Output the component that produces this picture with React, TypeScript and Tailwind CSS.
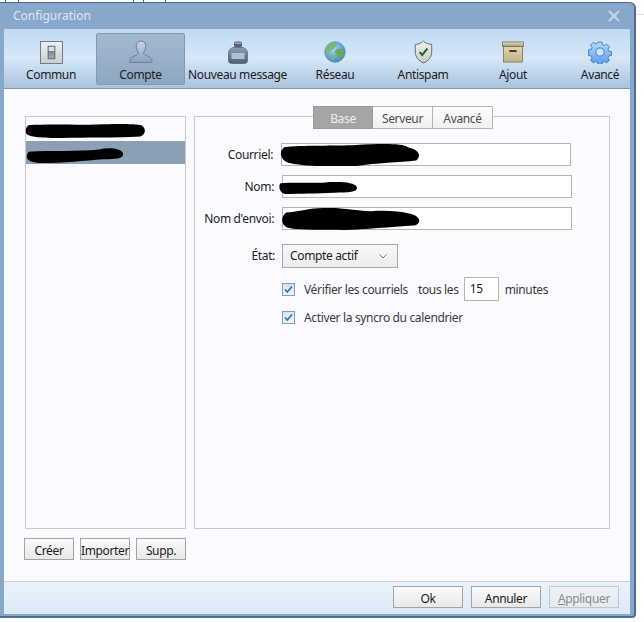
import React from "react";

const font = { fontFamily: '"Noto Sans", "Open Sans", sans-serif' };

function Scribble({ d, className }: { d: string; className: string }) {
  return (
    <svg className={`absolute pointer-events-none ${className}`} viewBox="0 0 100 20" preserveAspectRatio="none" aria-hidden="true">
      <path d={d} fill="#000" />
    </svg>
  );
}

const CommunIcon = () => (
  <svg width="23" height="23" viewBox="0 0 24 24">
    <defs>
      <linearGradient id="c1" x1="0" y1="0" x2="0" y2="1">
        <stop offset="0" stopColor="#eef1ee" />
        <stop offset="1" stopColor="#c9d0cb" />
      </linearGradient>
      <linearGradient id="c2" x1="0" y1="0" x2="0" y2="1">
        <stop offset="0" stopColor="#dde0de" />
        <stop offset="0.35" stopColor="#dde0de" />
        <stop offset="0.36" stopColor="#76838e" />
        <stop offset="1" stopColor="#a6b0b6" />
      </linearGradient>
    </defs>
    <rect x="0.5" y="0.5" width="23" height="23" fill="url(#c1)" stroke="#66798c" />
    <rect x="8.5" y="5.5" width="7" height="13" fill="url(#c2)" stroke="#5a6672" />
  </svg>
);

const CompteIcon = () => (
  <svg width="24" height="24" viewBox="0 0 24 24">
    <defs>
      <linearGradient id="u1" x1="0" y1="0" x2="0" y2="1">
        <stop offset="0" stopColor="#c9d5e4" />
        <stop offset="1" stopColor="#8c9fc0" />
      </linearGradient>
    </defs>
    <path
      d="M12 1c3.200 0 4.800 2.400 4.800 5.200 0 2.600-1 4.400-2 5.800-.6.900-.3 2 .8 2.600l5 2.500c1.400.7 2.400 2.200 2.400 3.900v1.500H1v-1.500c0-1.700 1-3.200 2.400-3.900l5-2.500c1.100-.6 1.400-1.700.8-2.600-1-1.400-2-3.200-2-5.800C7.200 3.400 8.800 1 12 1z"
      fill="url(#u1)"
      stroke="#6a7f9f"
    />
  </svg>
);

const InkIcon = () => (
  <svg width="20" height="23" viewBox="0 0 20 23">
    <defs>
      <linearGradient id="i1" x1="0" y1="0" x2="0" y2="1">
        <stop offset="0" stopColor="#8aa0b6" />
        <stop offset="1" stopColor="#4a5e76" />
      </linearGradient>
    </defs>
    <rect x="6" y="0.500" width="8" height="6" rx="2" fill="#56626f" />
    <rect x="7" y="1.500" width="6" height="1.500" fill="#99a4af" />
    <path d="M5 6.500h10c3 1 4.500 3 4.500 5.500v7.500c0 1.700-1.200 3-3 3h-13c-1.800 0-3-1.300-3-3V12c0-2.500 1.500-4.500 4.500-5.500z" fill="url(#i1)" stroke="#42536a" strokeWidth="0.6" />
    <rect x="3.500" y="12" width="13" height="6" fill="#aec0d1" />
  </svg>
);

const GlobeIcon = () => (
  <svg width="22" height="22" viewBox="0 0 24 24">
    <defs>
      <radialGradient id="g1" cx="0.4" cy="0.35" r="0.75">
        <stop offset="0" stopColor="#a9d9f1" />
        <stop offset="1" stopColor="#3180bf" />
      </radialGradient>
    </defs>
    <circle cx="12" cy="12" r="11.200" fill="url(#g1)" stroke="#5b8cab" strokeWidth="0.8" />
    <path d="M4 5c3-3 8-4 10-2 1 2-2 3-3 5s-3 1-4 3-1 4-3 2-2-6 0-8z" fill="#79ba66" />
    <path d="M14 9c2-1 6-1 8 2 0 3-1 6-4 9-2 0-3-2-3-4s-3-2-3-4 1-2 2-3z" fill="#67ab59" />
    <path d="M8 15c2 0 3 2 3 4s-1 3-2 2-2-5-1-6z" fill="#79ba66" />
  </svg>
);

const ShieldIcon = () => (
  <svg width="19" height="24" viewBox="0 0 22 24" preserveAspectRatio="none">
    <defs>
      <linearGradient id="s1" x1="0" y1="0" x2="0" y2="1">
        <stop offset="0" stopColor="#f1f3ef" />
        <stop offset="1" stopColor="#c3c9c3" />
      </linearGradient>
    </defs>
    <path d="M11 1c2 2 5 3 9.500 3.500V12c0 5-4 9-9.500 11C5.500 21 1.500 17 1.500 12V4.500C6 4 9 3 11 1z" fill="url(#s1)" stroke="#5c6a70" />
    <path d="M6.500 12l3 3 6-6.500" fill="none" stroke="#1f5a2a" strokeWidth="2" />
  </svg>
);

const BoxIcon = () => (
  <svg width="22" height="22" viewBox="0 0 24 24">
    <defs>
      <linearGradient id="b1" x1="0" y1="0" x2="0" y2="1">
        <stop offset="0" stopColor="#dfd7af" />
        <stop offset="1" stopColor="#bfb387" />
      </linearGradient>
      <linearGradient id="b2" x1="0" y1="0" x2="0" y2="1">
        <stop offset="0" stopColor="#e8dfbc" />
        <stop offset="1" stopColor="#a89c72" />
      </linearGradient>
    </defs>
    <rect x="1.500" y="6" width="21" height="17" fill="url(#b1)" stroke="#6d6a55" strokeWidth="0.8" />
    <rect x="0.500" y="1" width="23" height="5" fill="url(#b2)" stroke="#6d6a55" strokeWidth="0.8" />
    <rect x="8" y="10" width="8" height="2" fill="#36342a" />
  </svg>
);

const GearIcon = () => (
  <svg width="24" height="24" viewBox="0 0 24 24">
    <defs>
      <linearGradient id="ge" x1="0" y1="0" x2="0" y2="1">
        <stop offset="0" stopColor="#b3d8f8" />
        <stop offset="1" stopColor="#5a9ee8" />
      </linearGradient>
    </defs>
    <path
      fillRule="evenodd"
      d="M9.800 1h4.400l.6 3 2 .9 2.600-1.700 3.100 3.100-1.700 2.600.9 2 3 .6v4.400l-3 .6-.9 2 1.700 2.600-3.100 3.100-2.600-1.700-2 .9-.6 3H9.800l-.6-3-2-.9-2.600 1.700-3.100-3.100 1.700-2.600-.9-2-3-.6V9.600l3-.6.9-2-1.700-2.600 3.100-3.100 2.600 1.700 2-.9zM12 7.500a4.500 4.500 0 1 0 0 9 4.500 4.500 0 0 0 0-9z"
      transform="translate(1.200 1.200) scale(0.9)"
      fill="url(#ge)"
      stroke="#2d6fbd"
      strokeWidth="0.9"
    />
  </svg>
);

const items = [
  { label: "Commun", w: "w-[90px]", icon: <CommunIcon /> },
  { label: "Compte", w: "w-[89px]", icon: <CompteIcon />, active: true },
  { label: "Nouveau message", w: "w-[105px]", icon: <InkIcon /> },
  { label: "Réseau", w: "w-[90px]", icon: <GlobeIcon /> },
  { label: "Antispam", w: "w-[86px]", icon: <ShieldIcon /> },
  { label: "Ajout", w: "w-[94px]", icon: <BoxIcon /> },
  { label: "Avancé", w: "w-[70px] ml-[5px]", icon: <GearIcon /> },
];

function ToolItem({ label, w, icon, active }: { label: string; w: string; icon: React.ReactNode; active?: boolean }) {
  return (
    <div
      className={`${w} shrink-0 h-[52px] flex flex-col items-center rounded-[2px] border pt-[6px] ${
        active ? "border-[#8299b1] bg-gradient-to-b from-[#a3b9d0] to-[#8ea6bf]" : "border-transparent"
      }`}
    >
      <div className="h-[24px] flex items-center justify-center">{icon}</div>
      <div className="mt-[3px] text-[12px] leading-[16px] whitespace-nowrap text-[#1b1b1b]">{label}</div>
    </div>
  );
}

function Btn({ children, className = "" }: { children: React.ReactNode; className?: string }) {
  return (
    <div
      className={`h-[22px] pt-[3px] flex items-center justify-center border border-[#a3a3a3] bg-gradient-to-b from-[#fbfbfb] to-[#e8e8e8] text-[12px] leading-none text-[#1b1b1b] whitespace-nowrap ${className}`}
    >
      {children}
    </div>
  );
}

function Check() {
  return (
    <div className="w-[13px] h-[13px] shrink-0 border border-[#8a9bb0] bg-gradient-to-b from-[#d6e3f3] to-[#eef4fa] flex items-center justify-center">
      <svg width="9" height="9" viewBox="0 0 9 9">
        <path d="M1 4.500l2.300 2.500L8 1.500" fill="none" stroke="#3473b3" strokeWidth="1.700" />
      </svg>
    </div>
  );
}

function Field({ label, scribble, className = "" }: { label: string; scribble: React.ReactNode; className?: string }) {
  return (
    <div className={`flex items-center h-[23px] ${className}`}>
      <div className="w-[79px] text-right text-[12px] text-[#1b1b1b] whitespace-nowrap">{label}</div>
      <div className="ml-[8px] w-[290px] h-[23px] border border-[#b4b4b4] bg-white relative">{scribble}</div>
    </div>
  );
}

export default function App() {
  return (
    <div className="w-[644px] h-[622px] bg-white relative overflow-hidden pt-[2px] tracking-[-0.35px]" style={font}>
      <div className="absolute left-[5px] top-0 w-px h-[2px] bg-[#5a6a7a]" />
      <div className="absolute left-[18px] top-0 w-px h-[2px] bg-[#5a6a7a]" />
      <div className="absolute left-[133px] top-0 w-px h-[2px] bg-[#5a6a7a]" />
      <div className="absolute left-[143px] top-0 w-px h-[2px] bg-[#5a6a7a]" />
      <div className="absolute left-[165px] top-0 w-px h-[2px] bg-[#5a6a7a]" />
      <div className="absolute left-[636px] top-[14px] w-[8px] h-px bg-[#e2e2e2]" />

      <div className="w-[636px] h-[616px] rounded-tr-[6px] rounded-br-[4px] border-t border-r-2 border-b-2 border-[#4f6d8f] bg-[#87a7cb] flex flex-col pl-[4px] pr-[4px] pb-[2px]">
        <div className="h-[26px] shrink-0 flex items-center justify-between pl-[9px] pr-[10px]">
          <span className="text-[12px] tracking-normal text-[#dce7f3]">Configuration</span>
          <svg width="12" height="12" viewBox="0 0 12 12">
            <path d="M1 1l10 10M11 1L1 11" stroke="#c3d5e8" strokeWidth="2.200" />
          </svg>
        </div>

        <div className="h-[60px] shrink-0 flex items-start pt-[4px] pl-[2px] bg-gradient-to-b from-[#c0daf2] via-[#d6e7f8] to-[#a9c3dc] border-b border-[#7f97ad]">
          {items.map((it) => (
            <ToolItem key={it.label} {...it} />
          ))}
        </div>

        <div className="flex-1 bg-[#f9fbff] flex flex-col pt-[27px] pl-[21px] pr-[20px]">
          <div className="flex gap-[8px] h-[413px]">
            <div className="w-[161px] border border-[#c9c9c9] flex flex-col pt-[5px]">
              <div className="h-[19px] relative">
                <Scribble className="left-[-1px] top-[1px] w-[120px] h-[15px]" d="M3 3C20 1 45 3 60 2 75 1 92 1 97 3 101 7 101 15 96 18 75 20 50 19 30 20 15 20 3 19 1 14 0 9 1 5 3 3Z" />
              </div>
              <div className="h-[23px] bg-[#8ba0b5] relative">
                <Scribble className="left-0 top-[7px] w-[97px] h-[15px]" d="M3 5C25 3 55 5 75 2 85-1 98 0 100 7 101 14 94 15 80 15 60 17 40 20 15 20 4 19 0 15 1 11 1 8 2 6 3 5Z" />
              </div>
            </div>

            <div className="w-[416px] h-[413px] border border-[#c9c9c9] flex flex-col">
              <div className="flex justify-center ml-[2px] mt-[-11px] h-[23px] shrink-0 text-[12px] leading-none">
                <div className="w-[60px] pt-[2px] border border-[#9a9a9a] bg-[#a5a5a5] text-[#eeeeee] flex items-center justify-center">Base</div>
                <div className="w-[60px] pt-[2px] border-y border-r border-[#b4b4b4] bg-gradient-to-b from-[#fdfdfd] to-[#f0f0f0] text-[#4c4c4c] flex items-center justify-center">Serveur</div>
                <div className="w-[60px] pt-[2px] border-y border-r border-[#b4b4b4] bg-gradient-to-b from-[#fdfdfd] to-[#f0f0f0] text-[#4c4c4c] flex items-center justify-center">Avancé</div>
              </div>

              <div className="pt-[14px] flex flex-col">
                <Field
                  label="Courriel:"
                  className="-ml-px"
                  scribble={<Scribble className="left-[-2px] top-0 w-[139px] h-[22px]" d="M3 3C15 1 40 2 55 1 70 0 88-1 92 3 100 5 102 11 98 15 85 17 70 17 55 20 35 21 15 20 6 17 0 14-1 7 3 3Z" />}
                />
                <Field
                  label="Nom:"
                  className="mt-[9px]"
                  scribble={<Scribble className="left-[-4px] top-[6px] w-[78px] h-[12px]" d="M2 2C25 0 50 3 65 0 85-1 100 2 100 10 100 18 85 17 70 18 50 19 25 20 8 20 0 18-1 6 2 2Z" />}
                />
                <Field
                  label="Nom d'envoi:"
                  className="mt-[9px]"
                  scribble={<Scribble className="left-[-1px] top-0 w-[138px] h-[22px]" d="M3 4C15 3 20 0 30 0 40-1 48 2 65 3 75 2 85 3 92 5 100 7 102 13 96 16 78 17 60 20 45 20 30 19 15 21 4 18-1 15-1 8 3 4Z" />}
                />

                <div className="flex items-center h-[24px] mt-[14px]">
                  <div className="w-[80px] text-right text-[12px] text-[#1b1b1b]">État:</div>
                  <div className="ml-[7px] w-[116px] h-[24px] border border-[#a8a8a8] bg-gradient-to-b from-[#f8f8f8] to-[#ececec] flex items-center pl-[7px] pr-[10px] justify-between text-[12px] text-[#1b1b1b]">
                    <span>Compte actif</span>
                    <svg width="8" height="5" viewBox="0 0 8 5">
                      <path d="M0.500 0.500L4 4l3.500-3.500" fill="none" stroke="#777" />
                    </svg>
                  </div>
                </div>

                <div className="flex items-center h-[24px] mt-[9px] ml-[87px] text-[12px] text-[#3a3a3a]">
                  <Check />
                  <span className="ml-[9px] pt-px">Vérifier les courriels</span>
                  <span className="ml-[10px] pt-px">tous les</span>
                  <div className="ml-[5px] w-[35px] h-[24px] border border-[#b4b4b4] bg-white pl-[5px] leading-[22px] text-[#1b1b1b]">15</div>
                  <span className="ml-[6px] pt-px">minutes</span>
                </div>

                <div className="flex items-center h-[13px] mt-[10px] ml-[87px] text-[12px] text-[#3a3a3a]">
                  <Check />
                  <span className="ml-[9px] pt-px">Activer la syncro du calendrier</span>
                </div>
              </div>
            </div>
          </div>

          <div className="flex gap-[6px] mt-[9px] ml-[-1px]">
            <Btn className="w-[50px]">Créer</Btn>
            <Btn className="w-[50px]">Importer</Btn>
            <Btn className="w-[50px]">Supp.</Btn>
          </div>
        </div>

        <div className="h-[33px] shrink-0 border-t border-[#c9cfd6] bg-gradient-to-b from-[#eaf3fb] to-[#dce9f8] flex items-start justify-end gap-[8px] pt-[4px] pr-[11px]">
          <Btn className="w-[70px]">Ok</Btn>
          <Btn className="w-[70px]">Annuler</Btn>
          <Btn className="w-[70px] !text-[#8a8a8a] !border-[#c2c7cc] !from-[#eef2f6] !to-[#e4eaf1]">
            <span>
              <span className="underline">A</span>ppliquer
            </span>
          </Btn>
        </div>
      </div>
    </div>
  );
}
